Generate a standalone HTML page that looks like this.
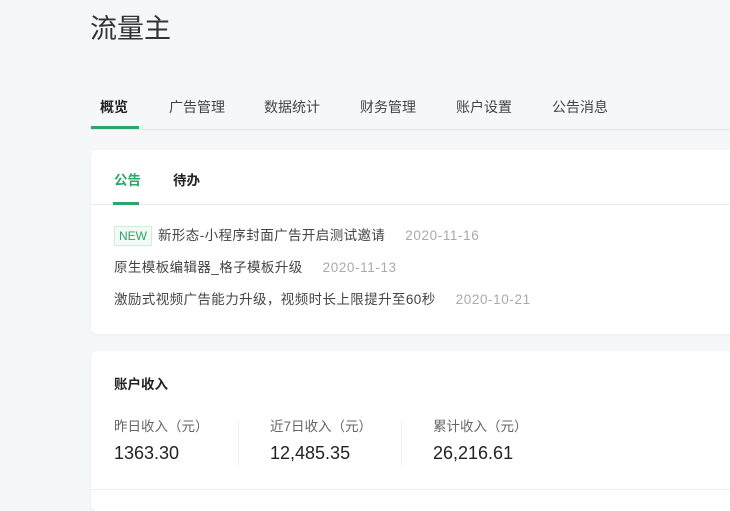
<!DOCTYPE html>
<html><head><meta charset="utf-8"><style>
*{margin:0;padding:0;box-sizing:border-box}
body{width:730px;height:498px;overflow:hidden;background:#f6f7f9;font-family:"Liberation Sans","Noto Sans CJK SC",sans-serif;color:#353535;position:relative}
.a{position:absolute;white-space:nowrap}
.title{left:90px;top:13px;font-size:27px;color:#333;line-height:32px}
.nav{top:97px;font-size:14px;color:#444;line-height:20px}
.card{position:absolute;left:91px;width:660px;background:#fff;border-radius:6px;box-shadow:0 1px 3px rgba(0,0,0,0.05)}
.row{font-size:13.5px;color:#444;line-height:20px;letter-spacing:0.4px}
.date{color:#aaa;margin-left:20px;letter-spacing:0.6px}
.lbl{font-size:13.5px;color:#666;line-height:20px}
.val{font-size:18px;color:#222;line-height:24px;font-weight:500}
</style></head><body>
<div class="a title">流量主</div>
<div class="a nav" style="left:100px;color:#222;font-weight:bold">概览</div>
<div class="a nav" style="left:169px">广告管理</div>
<div class="a nav" style="left:264px">数据统计</div>
<div class="a nav" style="left:360px">财务管理</div>
<div class="a nav" style="left:456px">账户设置</div>
<div class="a nav" style="left:552px">公告消息</div>
<div class="a" style="left:91px;top:129px;width:640px;height:1px;background:#e2e3e5"></div>
<div class="a" style="left:91px;top:126px;width:48px;height:3px;background:#2aa865"></div>

<div class="card" style="top:150px;height:184px">
<div class="a" style="left:23px;top:19px;font-size:13.5px;font-weight:bold;color:#2aa865">公告</div>
<div class="a" style="left:82px;top:19px;font-size:13.5px;font-weight:bold;color:#222">待办</div>
<div class="a" style="left:0;top:54px;width:660px;height:1px;background:#eceded"></div>
<div class="a" style="left:22px;top:52px;width:26px;height:3px;background:#2aa865"></div>
<div class="a row" style="left:23px;top:76px"><span style="display:inline-block;border:1px solid #cfeedd;background:#f1faf5;color:#2aa865;font-size:12px;line-height:18px;padding:0 4px;margin-right:6px;letter-spacing:0">NEW</span>新形态-小程序封面广告开启测试邀请<span class="date">2020-11-16</span></div>
<div class="a row" style="left:23px;top:108px">原生模板编辑器_格子模板升级<span class="date">2020-11-13</span></div>
<div class="a row" style="left:23px;top:140px">激励式视频广告能力升级，视频时长上限提升至60秒<span class="date">2020-10-21</span></div>
</div>

<div class="card" style="top:351px;height:160px">
<div class="a" style="left:23px;top:22px;font-size:13.5px;font-weight:bold;color:#222">账户收入</div>
<div class="a lbl" style="left:23px;top:66px">昨日收入（元）</div>
<div class="a val" style="left:23px;top:90px">1363.30</div>
<div class="a" style="left:147px;top:70px;width:1px;height:44px;background:#eee"></div>
<div class="a lbl" style="left:179px;top:66px">近7日收入（元）</div>
<div class="a val" style="left:179px;top:90px">12,485.35</div>
<div class="a" style="left:310px;top:70px;width:1px;height:44px;background:#eee"></div>
<div class="a lbl" style="left:342px;top:66px">累计收入（元）</div>
<div class="a val" style="left:342px;top:90px">26,216.61</div>
<div class="a" style="left:0;top:138px;width:660px;height:1px;background:#eceded"></div>
</div>
</body></html>
